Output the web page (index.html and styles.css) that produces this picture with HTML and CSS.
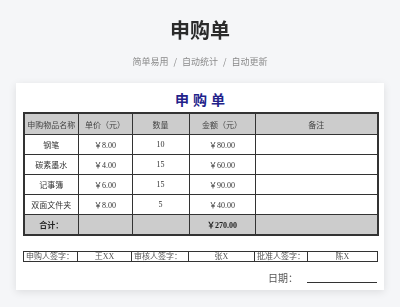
FILE: index.html
```html
<!DOCTYPE html>
<html lang="zh">
<head>
<meta charset="utf-8">
<title>申购单</title>
<link rel="stylesheet" href="styles.css">
</head>
<body>
<header class="hero">
  <h1 class="hero-title">申购单</h1>
  <p class="hero-sub">简单易用<span class="sep">/</span>自动统计<span class="sep">/</span>自动更新</p>
</header>
<main class="card">
  <h2 class="sheet-title">申购单</h2>
  <table class="grid">
    <colgroup>
      <col class="c1"><col class="c2"><col class="c3"><col class="c4"><col class="c5">
    </colgroup>
    <thead>
      <tr class="head">
        <th>申购物品名称</th><th>单价（元）</th><th>数量</th><th>金额（元）</th><th>备注</th>
      </tr>
    </thead>
    <tbody>
      <tr><td>钢笔</td><td class="num">￥8.00</td><td class="num">10</td><td class="num">￥80.00</td><td></td></tr>
      <tr><td>碳素墨水</td><td class="num">￥4.00</td><td class="num">15</td><td class="num">￥60.00</td><td></td></tr>
      <tr><td>记事簿</td><td class="num">￥6.00</td><td class="num">15</td><td class="num">￥90.00</td><td></td></tr>
      <tr><td>双面文件夹</td><td class="num">￥8.00</td><td class="num">5</td><td class="num">￥40.00</td><td></td></tr>
      <tr class="total"><td>合计：</td><td></td><td></td><td class="num">￥270.00</td><td></td></tr>
    </tbody>
  </table>
  <table class="sign">
    <colgroup>
      <col class="c1"><col class="c2"><col class="c3"><col class="c4"><col class="s5"><col class="s6">
    </colgroup>
    <tr>
      <td class="lbl">申购人签字：</td><td>王XX</td>
      <td class="lbl">审核人签字：</td><td>张X</td>
      <td class="lbl">批准人签字：</td><td>陈X</td>
    </tr>
  </table>
  <div class="date-row">
    <span class="date-lbl">日期：</span>
    <span class="date-line"></span>
  </div>
</main>
</body>
</html>
```
FILE: styles.css
```css
html, body {
  margin: 0;
  padding: 0;
}
body {
  background: #f5f6f8;
  font-family: "Noto Sans CJK SC", "Noto Sans", sans-serif;
  width: 400px;
  height: 307px;
  overflow: hidden;
}
.hero {
  text-align: center;
  padding-top: 16px;
  will-change: transform;
}
.hero-title {
  margin: 0;
  font-size: 20px;
  line-height: 28px;
  font-weight: 700;
  color: #2b2b2b;
}
.hero-sub {
  margin: 11px 0 0;
  font-size: 9px;
  line-height: 14px;
  color: #8a8a8a;
}
.sep {
  margin: 0 5px;
}
.card {
  margin: 14px 16px 0;
  height: 207px;
  box-sizing: border-box;
  background: #fff;
  padding: 8px 7px 0;
  box-shadow: 0 2px 8px rgba(0, 0, 0, 0.10);
}
.sheet-title {
  margin: 0;
  text-align: center;
  font-size: 14px;
  line-height: 17px;
  letter-spacing: 4px;
  text-indent: 4px;
  font-weight: 700;
  color: #22228a;
}
table {
  border-collapse: collapse;
  table-layout: fixed;
  width: 354px;
  font-family: "Liberation Serif", "Noto Sans CJK SC", serif;
  color: #333;
  will-change: transform;
}
.grid {
  margin-top: 4px;
  border: 2px solid #333;
  font-size: 8px;
}
.c1 { width: 54px; }
.c2 { width: 54px; }
.c3 { width: 57px; }
.c4 { width: 66px; }
.c5 { width: 123px; }
.s5 { width: 53px; }
.s6 { width: 70px; }
.grid th, .grid td {
  border: 1px solid #333;
  padding: 0;
  text-align: center;
  font-weight: 400;
  height: 19px;
}
.grid .head th {
  background: #cccccc;
  height: 20px;
  color: #444;
}
.grid .total td {
  background: #cccccc;
  font-weight: 700;
  color: #222;
}
.sign {
  margin-top: 15px;
  border: 1px solid #333;
  font-size: 8px;
}
.sign td {
  border: 1px solid #333;
  padding: 0;
  height: 9px;
  line-height: 9px;
  text-align: center;
  color: #555;
}
.sign td.lbl {
  text-align: left;
  padding-left: 2px;
}
.date-row {
  display: flex;
  justify-content: flex-end;
  align-items: flex-end;
  gap: 9px;
  margin-top: 10px;
  width: 354px;
  will-change: transform;
}
.date-lbl {
  font-size: 10px;
  line-height: 12px;
  color: #555;
}
.date-line {
  width: 70px;
  border-bottom: 1px solid #333;
  margin-bottom: 1px;
}
```
